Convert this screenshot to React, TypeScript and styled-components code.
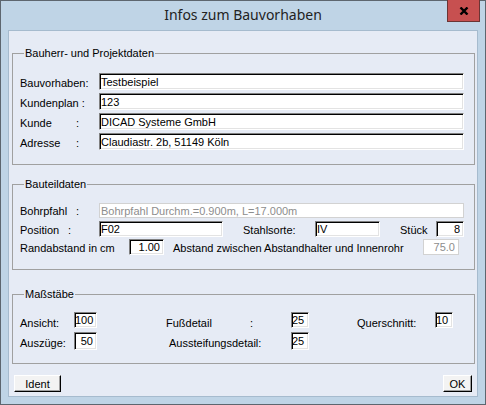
import styled, { createGlobalStyle } from 'styled-components';

const GlobalStyle = createGlobalStyle`
  html, body {
    margin: 0;
    padding: 0;
    background: #bfd4e6;
  }
  body {
    font-family: "Liberation Sans", Arial, sans-serif;
    font-size: 11px;
    color: #000;
  }
`;

const Window = styled.div`
  width: 486px;
  height: 405px;
  box-sizing: border-box;
  border: 1px solid #5d666f;
  background: #bfd4e6;
  display: flex;
  flex-direction: column;
`;

const TitleBar = styled.div`
  height: 29px;
  flex: none;
  display: grid;
  grid-template-columns: 1fr auto 1fr;
  align-items: start;
`;

const Title = styled.div`
  grid-column: 2;
  padding-top: 4px;
  font-family: "Noto Sans", "Open Sans", sans-serif;
  font-size: 14px;
  line-height: 20px;
  color: #222;
  white-space: nowrap;
`;

const CloseButton = styled.button`
  grid-column: 3;
  justify-self: end;
  width: 33px;
  height: 22px;
  margin: -1px 5px 0 0;
  padding: 0;
  background: #c75050;
  border: 1px solid #6b3434;
  border-top: none;
  display: flex;
  align-items: center;
  justify-content: center;
`;

const Client = styled.div`
  flex: 1;
  margin: 0 7px 7px;
  background: #e6ebf5;
  border: 1px solid #a6bbce;
  padding: 16px 2px 0 3px;
  display: flex;
  flex-direction: column;
`;

const Group = styled.fieldset<{ $mt: number; $pt: number; $pb: number; $gap: number }>`
  margin: ${p => p.$mt}px 0 0;
  padding: ${p => p.$pt}px 10px ${p => p.$pb}px 7px;
  border: 1px solid #a0a0a0;
  min-width: 0;
  display: flex;
  flex-direction: column;
  gap: ${p => p.$gap}px;
`;

const Legend = styled.legend`
  margin-left: 4px;
  padding: 0 1px;
  line-height: 12px;
  font-size: 11px;
`;

const Row = styled.div<{ $h: number }>`
  display: flex;
  align-items: flex-start;
  height: ${p => p.$h}px;
`;

const Label = styled.span<{ $w?: number; $ml?: number; $pt: number }>`
  flex: none;
  width: ${p => (p.$w ? `${p.$w}px` : 'auto')};
  margin-left: ${p => p.$ml ?? 0}px;
  padding-top: ${p => p.$pt}px;
  line-height: 13px;
  white-space: nowrap;
`;

const Name = styled.span<{ $w: number }>`
  display: inline-block;
  width: ${p => p.$w}px;
`;

const Field = styled.input<{ $w?: number; $h: number; $right?: boolean; $pl?: number }>`
  box-sizing: border-box;
  flex: ${p => (p.$w ? 'none' : '1')};
  width: ${p => (p.$w ? `${p.$w}px` : 'auto')};
  min-width: 0;
  height: ${p => p.$h}px;
  margin: 0;
  padding: 0 ${p => (p.$right ? 3 : 1)}px 0 ${p => p.$pl ?? 1}px;
  font: 11px "Liberation Sans", Arial, sans-serif;
  color: #000;
  background: #fff;
  text-align: ${p => (p.$right ? 'right' : 'left')};
  border-style: solid;
  border-width: 1px;
  border-color: #808080 #fff #fff #808080;
  box-shadow: inset 1px 1px 0 #000, inset -1px -1px 0 #e3e3e3;
  outline: none;
`;

const GreyField = styled(Field)`
  color: #8d8d8d;
  border-color: #d2d2d2;
  box-shadow: none;
`;

const ButtonRow = styled.div`
  display: flex;
  justify-content: space-between;
  margin-top: 11px;
  padding: 0 3px 0 2px;
`;

const Button = styled.button<{ $w: number }>`
  width: ${p => p.$w}px;
  height: 17px;
  padding: 0;
  font: 11px "Liberation Sans", Arial, sans-serif;
  color: #000;
  background: #f3f3f3;
  border: 1px solid;
  border-color: #fff #000 #000 #fff;
  box-shadow: inset -1px -1px 0 #a0a0a0;
`;

const CloseGlyph = () => (
  <svg width="10" height="8" viewBox="0 0 10 8">
    <path d="M1.5 0.5 L8.5 7.5 M8.5 0.5 L1.5 7.5" stroke="#000" strokeWidth="2.4" />
  </svg>
);

export default function App() {
  return (
    <>
      <GlobalStyle />
      <Window>
        <TitleBar>
          <Title>Infos zum Bauvorhaben</Title>
          <CloseButton aria-label="Schließen">
            <CloseGlyph />
          </CloseButton>
        </TitleBar>
        <Client>
          <Group $mt={0} $pt={14} $pb={14} $gap={3}>
            <Legend>Bauherr- und Projektdaten</Legend>
            <Row $h={17}>
              <Label $w={79} $pt={4}>Bauvorhaben:</Label>
              <Field $h={17} readOnly defaultValue="Testbeispiel" />
            </Row>
            <Row $h={17}>
              <Label $w={79} $pt={4}>Kundenplan :</Label>
              <Field $h={17} readOnly defaultValue="123" />
            </Row>
            <Row $h={17}>
              <Label $w={79} $pt={4}><Name $w={56}>Kunde</Name>:</Label>
              <Field $h={17} readOnly defaultValue="DICAD Systeme GmbH" />
            </Row>
            <Row $h={17}>
              <Label $w={79} $pt={4}><Name $w={56}>Adresse</Name>:</Label>
              <Field $h={17} readOnly defaultValue="Claudiastr. 2b, 51149 Köln" />
            </Row>
          </Group>

          <Group $mt={13} $pt={13} $pb={14} $gap={2}>
            <Legend>Bauteildaten</Legend>
            <Row $h={16}>
              <Label $w={79} $pt={2}><Name $w={56}>Bohrpfahl</Name>:</Label>
              <GreyField $h={15} readOnly defaultValue="Bohrpfahl Durchm.=0.900m, L=17.000m" />
            </Row>
            <Row $h={16}>
              <Label $w={79} $pt={3}><Name $w={48}>Position</Name>:</Label>
              <Field $w={124} $h={16} readOnly defaultValue="F02" />
              <Label $w={72} $ml={20} $pt={3}>Stahlsorte:</Label>
              <Field $w={65} $h={16} readOnly defaultValue="IV" />
              <Label $w={36} $ml={20} $pt={3}>Stück</Label>
              <Field $w={28} $h={16} $right readOnly defaultValue="8" />
            </Row>
            <Row $h={16}>
              <Label $w={109} $pt={3}>Randabstand in cm</Label>
              <Field $w={35} $h={16} $right readOnly defaultValue="1.00" />
              <Label $w={250} $ml={9} $pt={3}>Abstand zwischen Abstandhalter und Innenrohr</Label>
              <GreyField $w={36} $h={16} $right readOnly defaultValue="75.0" />
            </Row>
          </Group>

          <Group $mt={18} $pt={12} $pb={13} $gap={4}>
            <Legend>Maßstäbe</Legend>
            <Row $h={16}>
              <Label $w={54} $pt={5}>Ansicht:</Label>
              <Field $w={23} $h={16} $pl={0} readOnly defaultValue="100" />
              <Label $w={125} $ml={69} $pt={5}><Name $w={84}>Fußdetail</Name>:</Label>
              <Field $w={18} $h={16} $pl={0} readOnly defaultValue="25" />
              <Label $w={78} $ml={48} $pt={5}>Querschnitt:</Label>
              <Field $w={18} $h={16} $pl={0} readOnly defaultValue="10" />
            </Row>
            <Row $h={18}>
              <Label $w={54} $pt={5}>Auszüge:</Label>
              <Field $w={23} $h={18} $right readOnly defaultValue="50" />
              <Label $w={122} $ml={72} $pt={5}>Aussteifungsdetail:</Label>
              <Field $w={18} $h={18} $pl={0} readOnly defaultValue="25" />
            </Row>
          </Group>

          <ButtonRow>
            <Button $w={47}>Ident</Button>
            <Button $w={29}>OK</Button>
          </ButtonRow>
        </Client>
      </Window>
    </>
  );
}
